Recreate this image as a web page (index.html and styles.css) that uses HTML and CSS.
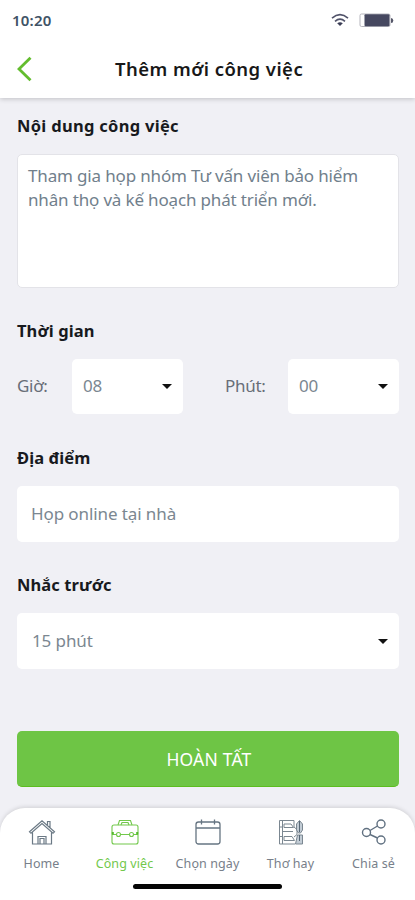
FILE: index.html
```html
<!DOCTYPE html>
<html lang="vi">
<head>
<meta charset="utf-8">
<title>Thêm mới công việc</title>
<link rel="stylesheet" href="styles.css">
</head>
<body>
<div class="app">
  <header class="header">
    <div class="status">
      <span class="time">10:20</span>
      <svg class="wifi" viewBox="0 0 18 14" width="18" height="14" fill="none" stroke="#51536a" stroke-width="1.6"><path d="M1 5.2Q9-1.8 17 5.2M4 8.3Q9 4 14 8.3"/><path d="M6.2 10.3Q9 8 11.8 10.3L9 13Z" fill="#3b3d56" stroke="none"/></svg>
      <svg class="battery" viewBox="0 0 35 15" width="35" height="15"><rect x="1" y="1" width="30" height="12.500" rx="1.500" fill="#fff" stroke="#b5b5bd"/><rect x="5.500" y="1.300" width="25" height="12" rx="1" fill="#464860"/><path d="M32 5q2.300 0 2.300 2.500T32 10z" fill="#555769"/></svg>
    </div>
    <div class="titlebar">
      <svg class="back" viewBox="0 0 16 26" width="16" height="26" fill="none" stroke="#63bd2e" stroke-width="2.800"><path d="M13.500 1.700 2 13 13.500 24.300"/></svg>
      <h1 class="title">Thêm mới công việc</h1>
    </div>
  </header>
  <main class="form">
    <h2 class="label l-content">Nội dung công việc</h2>
    <div class="textarea"><div class="line1">Tham gia họp nhóm Tư vấn viên bảo hiểm</div><div class="line2">nhân thọ và kế hoạch phát triển mới.</div></div>
    <h2 class="label l-time">Thời gian</h2>
    <div class="time-row">
      <span class="unit hour">Giờ:</span>
      <div class="field small"><span>08</span><i class="caret"></i></div>
      <span class="unit minute">Phút:</span>
      <div class="field small"><span>00</span><i class="caret"></i></div>
    </div>
    <h2 class="label l-place">Địa điểm</h2>
    <div class="field"><span class="place">Họp online tại nhà</span></div>
    <h2 class="label l-remind">Nhắc trước</h2>
    <div class="field"><span class="remind">15 phút</span><i class="caret"></i></div>
    <div class="submit"><span>HOÀN TẤT</span></div>
  </main>
  <nav class="nav">
    <div class="tabs">
      <div class="tab t1">
        <svg viewBox="0 0 28 26" width="28" height="26" fill="none" stroke="#6b7985" stroke-width="1.200"><path d="M1.500 12.800 14 1.800l12.500 11-1.500 1.500L14 4.500 3 14.300zM4.500 13.500v11.500h19V13.500M10 25v-7.500h8V25M12 25v-5.500h4V25M19.500 6V2.500h2.500v6"/></svg>
        <span>Home</span>
      </div>
      <div class="tab t2 active">
        <svg viewBox="0 0 28 26" width="28" height="26" fill="none" stroke="#72c84b" stroke-width="1.100"><rect x="1" y="6" width="26" height="19" rx="2"/><path d="M7 6 8.500 1.500h11L21 6M10 6l1-2.500h6L18 6M1 15.500h4M9.500 15.500h9M23 15.500h4"/><circle cx="7.500" cy="15.500" r="2"/><circle cx="20.500" cy="15.500" r="2"/><path d="M.8 13h2v2.500h-2zM25.200 13h2v2.500h-2z" fill="#52b92a" stroke="none"/></svg>
        <span>Công việc</span>
      </div>
      <div class="tab t3">
        <svg viewBox="0 0 28 26" width="28" height="26" fill="none" stroke="#667582" stroke-width="1.300"><rect x="2" y="3" width="24" height="22" rx="2.500"/><path d="M2 9h24M7.500 .5v5M20.500 .5v5"/></svg>
        <span>Chọn ngày</span>
      </div>
      <div class="tab t4">
        <svg viewBox="0 0 28 26" width="28" height="26" fill="none" stroke="#7b8791" stroke-width="1"><path d="M17 1.500H2.500v23.500H18M5.500 1.500v23.500M7 5h7l2.500 3.500H7zM6 12.500h10M7 17.500h8l2.500 4H7zM2.500 8h3M2.500 17.500h3M17 1.500V8l3 2.500v5L17 18"/><path d="M22.500 1.500 25.500 5v6L23.500 14h-2L19.500 11V5zM20.500 16h5v9h-7z" fill="#c2ccd5"/><path d="M22.500 2v11M22.500 16v6" stroke="#566776"/></svg>
        <span>Thơ hay</span>
      </div>
      <div class="tab t5">
        <svg viewBox="0 0 28 26" width="28" height="26" fill="none" stroke="#607080" stroke-width="1.400"><circle cx="6.500" cy="13.500" r="4"/><circle cx="21" cy="5" r="4"/><circle cx="21" cy="21" r="4"/><path d="M10 11.500 17.500 7M10 15.500 17.500 19"/></svg>
        <span>Chia sẻ</span>
      </div>
    </div>
    <div class="home-bar"></div>
  </nav>
</div>
</body>
</html>
```
FILE: styles.css
```css
* { box-sizing: border-box; }
body { margin: 0; font-family: "Noto Sans", "Open Sans", sans-serif; }
svg { display: block; }
span, .label, .title, .line1, .line2 { white-space: nowrap; }
.app { width: 415px; height: 900px; display: flex; flex-direction: column; background: #f0f0f5; overflow: hidden; }
.header { height: 98px; background: #fff; box-shadow: 0 1px 5px #0003; flex: none; }
.status { height: 40px; display: flex; align-items: center; padding: 0 21px 0 12px; }
.time { font-size: 15px; letter-spacing: .2px; font-weight: 600; color: #405366; margin-right: auto; }
.wifi { margin-right: 10px; }
.titlebar { height: 58px; display: flex; align-items: center; padding-left: 17px; }
.title { margin: 0 0 0 82px; font-size: 18.5px; letter-spacing: .45px; line-height: 26px; font-weight: 600; color: #181818; }
.form { flex: 1; padding: 0 16px 0 17px; }
.label { margin: 0; font-size: 16.5px; letter-spacing: .1px; line-height: 24px; font-weight: 700; color: #181a1e; }
.l-content { padding-top: 16px; height: 56px; letter-spacing: .3px; }
.textarea { height: 134px; background: #fff; border: 1px solid #e3e3e8; border-radius: 5px; padding: 9px 10px; font-size: 17px; letter-spacing: -.16px; line-height: 24px; color: #71808c; }
.l-time { padding-top: 31px; height: 71px; }
.time-row { display: flex; align-items: center; height: 55px; }
.unit { font-size: 17px; letter-spacing: -.3px; color: #686e78; flex: none; padding-bottom: 2px; }
.hour { width: 55px; }
.minute { width: 63px; margin-left: 42px; }
.field { height: 56px; background: #fff; border-radius: 5px; display: flex; align-items: center; justify-content: space-between; padding: 0 11px 0 15px; font-size: 17px; letter-spacing: -.1px; color: #7b8791; }
.field span { padding-bottom: 2px; }
.place { margin-left: -1px; }
.small { width: 111px; height: 55px; padding-left: 11px; flex: none; }
.caret { width: 0; height: 0; border: 5px solid transparent; border-top-color: #111; border-bottom: 0; }
.l-place { padding-top: 32px; height: 72px; }
.l-remind { padding-top: 31px; height: 71px; }
.submit { height: 56px; margin-top: 62px; border-radius: 5px; background: #6ec545; border-bottom: 1px solid #5cbd1f; color: #fff; display: flex; align-items: center; justify-content: center; font-size: 17.5px; letter-spacing: .2px; padding-left: 2px; }
.nav { height: 92px; background: #fff; border-radius: 25px 25px 0 0; box-shadow: 0 -1px 4px #0002; flex: none; }
.tabs { display: grid; grid-template-columns: repeat(5, 83px); height: 76px; padding-top: 11px; }
.tab { display: flex; flex-direction: column; align-items: center; gap: 10px; font-size: 12.500px; letter-spacing: .1px; line-height: 18px; color: #78808a; }
.active { color: #72c84b; }
.home-bar { width: 149px; height: 5px; border-radius: 3px; background: #050505; margin: 0 auto; }
```
